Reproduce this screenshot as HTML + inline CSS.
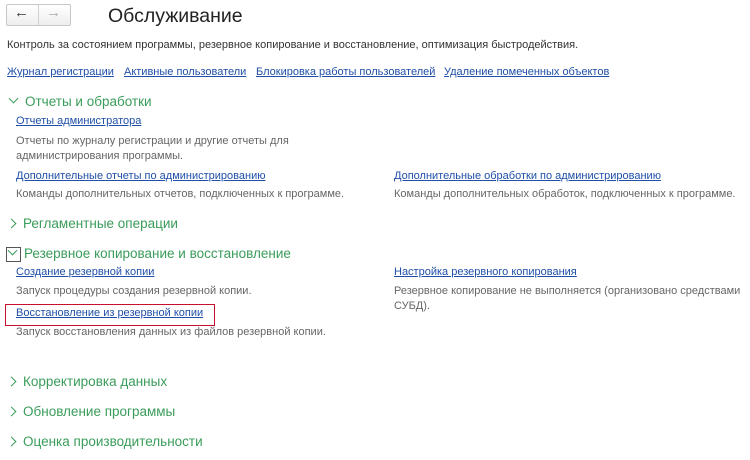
<!DOCTYPE html>
<html><head><meta charset="utf-8"><style>
body{margin:0;width:750px;height:460px;background:#fff;font-family:"Liberation Sans",Arial,sans-serif;position:relative;overflow:hidden;color:#4d4d4d}
.a{position:absolute;white-space:nowrap}
.l{color:#1f4fa8;text-decoration:underline;font-size:11px}
.t{font-size:11px;color:#666}
.h{font-size:13.5px;color:#3a9c5a}
.chev{display:inline-block;width:6px;height:6px;border-right:1.3px solid #3a9c5a;border-bottom:1.3px solid #3a9c5a;margin-right:8px}
.r{transform:rotate(-45deg);margin-left:8px;margin-bottom:1px}
.d{transform:rotate(45deg);margin-left:10px;margin-bottom:4px}
</style></head><body>
<div class="a" style="left:6px;top:4px;width:63px;height:20px;border:1px solid #c8c8c8;border-radius:2px;background:linear-gradient(#fff,#eee)"></div>
<div class="a" style="left:38px;top:5px;width:1px;height:20px;background:#d0d0d0"></div>
<div class="a" style="left:14px;top:4px;font-size:15px;font-weight:bold;color:#333">&#8592;</div>
<div class="a" style="left:46px;top:4px;font-size:15px;font-weight:bold;color:#aaa">&#8594;</div>
<div class="a" style="left:108px;top:5px;font-size:19.5px;color:#222">Обслуживание</div>
<div class="a t" style="left:7px;top:39px;color:#333">Контроль за состоянием программы, резервное копирование и восстановление, оптимизация быстродействия.</div>
<div class="a l" style="left:7px;top:66px">Журнал регистрации</div>
<div class="a l" style="left:124px;top:66px">Активные пользователи</div>
<div class="a l" style="left:256px;top:66px">Блокировка работы пользователей</div>
<div class="a l" style="left:444px;top:66px">Удаление помеченных объектов</div>
<div class="a h" style="left:0;top:94px"><span class="chev d"></span>Отчеты и обработки</div>
<div class="a l" style="left:16px;top:115px">Отчеты администратора</div>
<div class="a t" style="left:16px;top:134px;line-height:15px">Отчеты по журналу регистрации и другие отчеты для<br>администрирования программы.</div>
<div class="a l" style="left:16px;top:170px">Дополнительные отчеты по администрированию</div>
<div class="a t" style="left:16px;top:188px">Команды дополнительных отчетов, подключенных к программе.</div>
<div class="a l" style="left:394px;top:170px">Дополнительные обработки по администрированию</div>
<div class="a t" style="left:394px;top:188px">Команды дополнительных обработок, подключенных к программе.</div>
<div class="a h" style="left:0;top:216px"><span class="chev r"></span>Регламентные операции</div>
<div class="a" style="left:6px;top:247px;width:13px;height:13px;border:1px solid #555"></div>
<div class="a h" style="left:0;top:246px"><span class="chev d" style="margin-left:9px;margin-right:8px"></span>Резервное копирование и восстановление</div>
<div class="a l" style="left:16px;top:266px">Создание резервной копии</div>
<div class="a t" style="left:16px;top:285px">Запуск процедуры создания резервной копии.</div>
<div class="a l" style="left:394px;top:266px">Настройка резервного копирования</div>
<div class="a t" style="left:394px;top:284px;line-height:15px">Резервное копирование не выполняется (организовано средствами<br>СУБД).</div>
<div class="a" style="left:5px;top:304px;width:208px;height:20px;border:1.5px solid #c8102e"></div>
<div class="a l" style="left:16px;top:307px">Восстановление из резервной копии</div>
<div class="a t" style="left:16px;top:326px">Запуск восстановления данных из файлов резервной копии.</div>
<div class="a h" style="left:0;top:374px"><span class="chev r"></span>Корректировка данных</div>
<div class="a h" style="left:0;top:404px"><span class="chev r"></span>Обновление программы</div>
<div class="a h" style="left:0;top:434px"><span class="chev r"></span>Оценка производительности</div>
</body></html>
